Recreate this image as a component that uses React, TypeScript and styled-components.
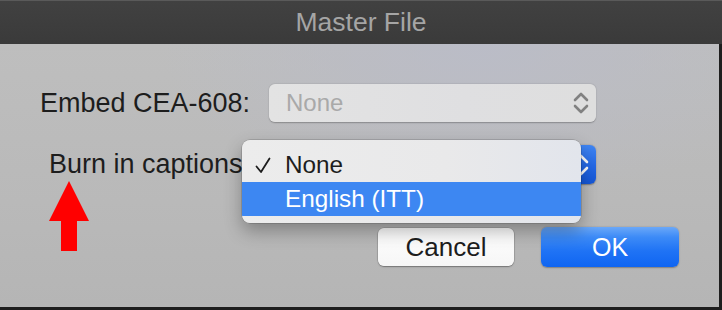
import React from "react";
import styled, { createGlobalStyle, css } from "styled-components";

const GlobalStyle = createGlobalStyle`
  html, body { margin: 0; padding: 0; background: #1c1c1c; }
  body { font-family: "Liberation Sans", Arial, sans-serif; }
`;

const Window = styled.div`
  width: 722px;
  height: 310px;
  display: flex;
  flex-direction: column;
  overflow: hidden;
  background: #1e1e1e;
`;

const TitleBar = styled.div`
  height: 43px;
  flex: none;
  border-top: 1px solid #5a5a5a;
  background: linear-gradient(180deg, #414141 0%, #3a3a3a 100%);
  display: flex;
  align-items: center;
  justify-content: center;
  color: #a5a5a5;
  font-size: 26.5px;
`;

const Body = styled.div`
  position: relative;
  flex: 1;
  margin-right: 3px;
  padding: 40px 40px 0 0;
  background:
    radial-gradient(ellipse 320px 160px at 480px 0px, rgba(186, 188, 200, 0.9), rgba(186, 188, 200, 0) 100%),
    linear-gradient(180deg, #bebebe 0%, #b9b9b9 60%, #b5b5b5 100%);
`;

const Form = styled.div`
  display: grid;
  grid-template-columns: 250px 327px;
  column-gap: 19px;
  row-gap: 23px;
`;

const Label = styled.div`
  text-align: right;
  align-self: center;
  font-size: 27px;
  color: #1d1d1d;
  white-space: nowrap;
`;

const Select = styled.div<{ $active?: boolean }>`
  position: relative;
  height: 38px;
  border-radius: 6px;
  display: flex;
  align-items: center;
  justify-content: space-between;
  padding: 0 7px 0 17px;
  font-size: 24px;
  ${(p) =>
    p.$active
      ? css`
          height: 39px;
          background: linear-gradient(180deg, #3f85f3 0%, #2468e6 55%, #1456d6 100%);
          box-shadow: 0 0.5px 1.5px rgba(0, 0, 0, 0.35);
          color: #fff;
        `
      : css`
          background: linear-gradient(90deg, #e3e3e3 0%, #dfdfe1 60%, #dedede 100%);
          box-shadow: 0 0.5px 1.5px rgba(0, 0, 0, 0.28);
          color: #a9a9a9;
        `}
`;

const Chevrons = styled.svg<{ $color: string }>`
  width: 16px;
  height: 24px;
  flex: none;
  polyline {
    fill: none;
    stroke: ${(p) => p.$color};
    stroke-width: 2.6;
    stroke-linecap: round;
    stroke-linejoin: round;
  }
`;

const Popup = styled.div`
  position: absolute;
  left: -27px;
  top: -5px;
  width: 339px;
  padding: 8px 0 7px;
  box-sizing: border-box;
  border-radius: 8px;
  background: linear-gradient(90deg, #ececec 0%, #e9e9ea 60%, #e2e5ec 100%);
  box-shadow: 0 0 0 0.5px rgba(0, 0, 0, 0.25), 0 8px 18px rgba(0, 0, 0, 0.3);
  overflow: hidden;
  z-index: 2;
`;

const MenuItem = styled.div<{ $highlighted?: boolean }>`
  height: 34px;
  display: flex;
  align-items: center;
  font-size: 24.3px;
  padding-left: 43px;
  position: relative;
  color: ${(p) => (p.$highlighted ? "#ffffff" : "#1d1d1d")};
  background: ${(p) => (p.$highlighted ? "#3d87f2" : "transparent")};
`;

const Check = styled.svg`
  position: absolute;
  left: 13px;
  top: 9px;
  width: 16px;
  height: 17px;
  polyline {
    fill: none;
    stroke: #1d1d1d;
    stroke-width: 1.8;
    stroke-linecap: round;
    stroke-linejoin: round;
  }
`;

const ButtonRow = styled.div`
  display: flex;
  justify-content: flex-end;
  align-items: center;
  gap: 27px;
  margin-top: 43px;
`;

const Button = styled.button<{ $primary?: boolean }>`
  font-family: "Liberation Sans", Arial, sans-serif;
  font-size: 26px;
  border: none;
  border-radius: 6px;
  padding: 0;
  display: flex;
  align-items: center;
  justify-content: center;
  ${(p) =>
    p.$primary
      ? css`
          width: 138px;
          height: 40px;
          color: #ffffff;
          font-size: 25px;
          background: linear-gradient(180deg, #6ba8f8 0%, #3d8bf7 25%, #1f73f5 60%, #0f65f2 100%);
          box-shadow: 0 0.5px 1.5px rgba(0, 0, 0, 0.3);
        `
      : css`
          width: 136px;
          height: 38px;
          color: #1d1d1d;
          background: linear-gradient(180deg, #ffffff 0%, #f6f6f6 100%);
          box-shadow: 0 0 0 0.5px rgba(0, 0, 0, 0.18), 0 1px 1.5px rgba(0, 0, 0, 0.3);
        `}
`;

const Arrow = styled.svg`
  position: absolute;
  left: 49px;
  top: 137px;
  width: 40px;
  height: 70px;
`;

const BottomBar = styled.div`
  height: 3px;
  flex: none;
  background: #1e1e1e;
`;

const UpDown = ({ color }: { color: string }) => (
  <Chevrons $color={color} viewBox="0 0 16 24">
    <polyline points="2,9 8,3 14,9" />
    <polyline points="2,15 8,21 14,15" />
  </Chevrons>
);

export default function App() {
  return (
    <>
      <GlobalStyle />
      <Window>
        <TitleBar>Master File</TitleBar>
        <Body>
          <Form>
            <Label>Embed CEA-608:</Label>
            <Select>
              <span>None</span>
              <UpDown color="#818181" />
            </Select>
            <Label>Burn in captions:</Label>
            <Select $active>
              <span>None</span>
              <UpDown color="#ffffff" />
              <Popup>
                <MenuItem>
                  <Check viewBox="0 0 16 17">
                    <polyline points="1.5,9.5 6,15 14.5,1.5" />
                  </Check>
                  None
                </MenuItem>
                <MenuItem $highlighted>English (ITT)</MenuItem>
              </Popup>
            </Select>
          </Form>
          <ButtonRow>
            <Button>Cancel</Button>
            <Button $primary>OK</Button>
          </ButtonRow>
          <Arrow viewBox="0 0 40 70">
            <polygon points="20,0 40,40 28,40 28,70 12,70 12,40 0,40" fill="#ff0000" />
          </Arrow>
        </Body>
        <BottomBar />
      </Window>
    </>
  );
}
